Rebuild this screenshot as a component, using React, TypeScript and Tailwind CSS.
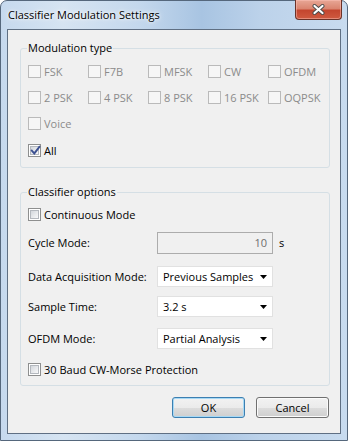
import React from "react";

type CbState = "disabled" | "off" | "on";

function CheckBox({ state }: { state: CbState }) {
  if (state === "disabled") {
    return <span className="block w-[13px] h-[13px] shrink-0 border border-[#bababa] bg-[#f6f6f6]" />;
  }
  return (
    <span className="relative block w-[13px] h-[13px] shrink-0 border border-[#8e8f8f] bg-white p-[1px]">
      <span className="block w-full h-full border border-[#b4b8be] bg-[linear-gradient(135deg,#d3d7dc,#f9f9fa)]" />
      {state === "on" && (
        <svg className="absolute left-[1px] top-[0px]" width="11" height="11" viewBox="0 0 11 11">
          <path d="M1.8 5.6 L4.3 8.4 L9.4 1.8" fill="none" stroke="#3d5191" strokeWidth="1.9" strokeLinecap="square" />
        </svg>
      )}
    </span>
  );
}

function CbItem({ label, state }: { label: string; state: CbState }) {
  return (
    <div className="flex items-center h-[19px] gap-[3px]">
      <CheckBox state={state} />
      <span className={state === "disabled" ? "text-[#8b8b8b]" : "text-black"}>{label}</span>
    </div>
  );
}

function Combo({ value }: { value: string }) {
  return (
    <div className="w-[116px] h-[21px] bg-white border border-[#e1e1e1] flex items-center justify-between pl-[5px] pr-[5px]">
      <span className="text-black">{value}</span>
      <svg width="7" height="4" viewBox="0 0 7 4">
        <path d="M0 0 H7 L3.5 4 Z" fill="#000" />
      </svg>
    </div>
  );
}

function Btn({ label, def }: { label: string; def?: boolean }) {
  return (
    <div
      className={
        "w-[73px] h-[21px] rounded-[3px] border flex items-center justify-center text-black " +
        (def
          ? "border-[#3c7fb1] shadow-[inset_0_0_0_1px_#a7d9f5] bg-[linear-gradient(180deg,#f2f2f2_0%,#ebebeb_50%,#dddddd_51%,#cfcfcf_100%)]"
          : "border-[#707070] shadow-[inset_0_0_0_1px_#fbfbfb] bg-[linear-gradient(180deg,#f2f2f2_0%,#ebebeb_50%,#dddddd_51%,#cfcfcf_100%)]")
      }
    >
      {label}
    </div>
  );
}

export default function App() {
  const row1 = ["FSK", "F7B", "MFSK", "CW", "OFDM"];
  const row2 = ["2 PSK", "4 PSK", "8 PSK", "16 PSK", "OQPSK"];
  return (
    <div className="w-[348px] h-[441px] font-['Open_Sans',sans-serif] text-[11px] leading-[16px]">
      <div className="w-full h-full flex flex-col border border-[#55677c] rounded-t-[7px] bg-[linear-gradient(90deg,#c6d9ee_0%,#d6e4f2_18%,#c4d8ed_40%,#a8c4e2_58%,#bcd2ea_75%,#c8dbef_100%)]">
        <div className="h-[28px] flex shrink-0">
          <div className="pl-[7px] pt-[6px] text-black [text-shadow:0_0_6px_#ffffff,0_0_3px_#ffffff]">
            Classifier Modulation Settings
          </div>
          <div className="ml-auto mr-[5px] -mt-[1px] w-[47px] h-[20px] rounded-b-[4px] border border-[#6b3228] border-t-0 bg-[linear-gradient(180deg,#e8a796_0%,#da8570_45%,#c4462f_55%,#cf5a40_100%)] flex items-center justify-center shadow-[inset_0_0_0_1px_rgba(255,200,190,0.45)]">
            <svg width="13" height="11" viewBox="0 0 13 11">
              <path d="M2.5 2 L10.5 9 M10.5 2 L2.5 9" stroke="#4a4a4a" strokeWidth="4" strokeLinecap="round" />
              <path d="M2.5 2 L10.5 9 M10.5 2 L2.5 9" stroke="#ffffff" strokeWidth="2.2" strokeLinecap="round" />
            </svg>
          </div>
        </div>
        <div className="mx-[6px] h-[405px] border border-[#5f6f83] bg-[#f0f0f0] flex flex-col pt-[10px]">
          <fieldset className="ml-[12px] w-[310px] border border-[#d5dfe5] rounded-[3px] p-0 m-0">
            <legend className="ml-[6px] px-[1px] text-black leading-[16px]">Modulation type</legend>
            <div className="pl-[7px] pt-[6px] pb-[7px] flex flex-col">
              <div className="grid grid-cols-[60px_60px_60px_60px_60px]">
                {row1.map((l) => (
                  <CbItem key={l} label={l} state="disabled" />
                ))}
              </div>
              <div className="grid grid-cols-[60px_60px_60px_60px_60px] mt-[7px]">
                {row2.map((l) => (
                  <CbItem key={l} label={l} state="disabled" />
                ))}
              </div>
              <div className="mt-[7px]">
                <CbItem label="Voice" state="disabled" />
              </div>
              <div className="mt-[8px]">
                <CbItem label="All" state="on" />
              </div>
            </div>
          </fieldset>
          <fieldset className="ml-[12px] mt-[16px] w-[310px] border border-[#d5dfe5] rounded-[3px] p-0 m-0">
            <legend className="ml-[6px] px-[1px] text-black leading-[16px]">Classifier options</legend>
            <div className="pl-[7px] pt-[5px] pb-[6px] flex flex-col">
              <CbItem label="Continuous Mode" state="off" />
              <div className="mt-[8px] flex items-center">
                <span className="w-[129px]">Cycle Mode:</span>
                <div className="w-[116px] h-[22px] border border-[#acacac] bg-[#f0f0f0] flex items-center justify-end pr-[5px] text-[#6d6d6d]">
                  10
                </div>
                <span className="ml-[6px]">s</span>
              </div>
              <div className="mt-[12px] flex items-center">
                <span className="w-[129px]">Data Acquisition Mode:</span>
                <Combo value="Previous Samples" />
              </div>
              <div className="mt-[9px] flex items-center">
                <span className="w-[129px]">Sample Time:</span>
                <Combo value="3.2 s" />
              </div>
              <div className="mt-[11px] flex items-center">
                <span className="w-[129px]">OFDM Mode:</span>
                <Combo value="Partial Analysis" />
              </div>
              <div className="mt-[11px]">
                <CbItem label="30 Baud CW-Morse Protection" state="off" />
              </div>
            </div>
          </fieldset>
          <div className="mt-[11px] mr-[11px] flex justify-end gap-[11px]">
            <Btn label="OK" def />
            <Btn label="Cancel" />
          </div>
        </div>
      </div>
    </div>
  );
}
